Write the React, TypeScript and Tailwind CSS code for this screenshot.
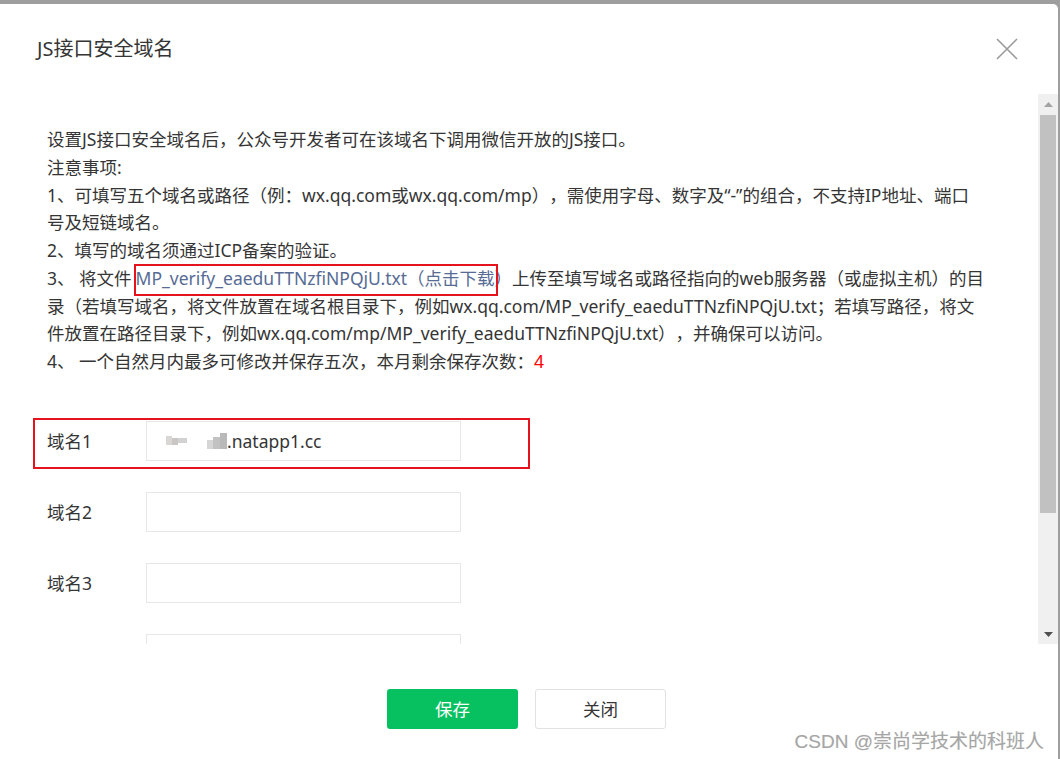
import { useState } from "react"

const FILE_NAME = "MP_verify_eaeduTTNzfiNPQjU.txt"

export default function App() {
  const [domains, setDomains] = useState(["", "", "", "", ""])

  return (
    <div className="h-[759px] w-[1060px] overflow-hidden bg-[#9e9e9e] pt-[4px] pr-[2px] font-['Noto_Sans','Noto_Sans_CJK_SC',sans-serif] text-[#353535] [text-spacing-trim:space-all]">
      <div className="relative flex h-full flex-col rounded-tr-[5px] bg-white">
        <Header />

        <div className="flex h-[550px]">
          <div className="flex-1 overflow-hidden pl-[47px] pt-[32px]">
            <Notes />

            <div className="mt-[45px] flex flex-col gap-[31px]">
              {domains.map((value, i) => (
                <DomainRow
                  key={i}
                  index={i + 1}
                  value={value}
                  highlighted={i === 0}
                  onChange={(v) =>
                    setDomains((d) => d.map((x, j) => (j === i ? v : x)))
                  }
                />
              ))}
            </div>
          </div>
          <Scrollbar />
        </div>

        <div className="flex justify-center gap-[17px] pt-[45px] pr-[5px]">
          <button className="h-[40px] w-[131px] rounded-[3px] bg-[#07c160] text-[17.5px] text-white">
            保存
          </button>
          <button className="h-[40px] w-[131px] rounded-[3px] border border-[#e2e2e2] bg-white text-[17.5px] text-[#353535]">
            关闭
          </button>
        </div>

        <div className="absolute right-[14px] bottom-[3px] font-['Liberation_Sans','Noto_Sans_CJK_SC',sans-serif] text-[19px] text-[#a6a6a6] [text-shadow:0_0_1px_#e0e0e0]">
          CSDN @崇尚学技术的科班人
        </div>
      </div>
    </div>
  )
}

function Header() {
  return (
    <div className="flex h-[90px] shrink-0 items-center justify-between pl-[37px] pr-[40px]">
      <h3 className="text-[20px] text-[#353535]">JS接口安全域名</h3>
      <svg width="22" height="22" viewBox="0 0 22 22" className="text-[#9a9a9a]">
        <path d="M1 1L21 21M21 1L1 21" stroke="currentColor" strokeWidth="1.6" fill="none" />
      </svg>
    </div>
  )
}

function Notes() {
  return (
    <div className="whitespace-nowrap text-[17.5px] leading-[27.75px]">
      <p>设置JS接口安全域名后，公众号开发者可在该域名下调用微信开放的JS接口。</p>
      <p>注意事项:</p>
      <p>
        1、可填写五个域名或路径（例：wx.qq.com或wx.qq.com/mp），需使用字母、数字及“-”的组合，不支持IP地址、端口
        <br />
        号及短链域名。
      </p>
      <p>2、填写的域名须通过ICP备案的验证。</p>
      <p>
        3、 将文件
        <a className="relative ml-[4px] text-[#576b95]">
          {FILE_NAME}（点击下载）
          {/* red annotation box from the screenshot */}
          <span className="pointer-events-none absolute -top-[2px] -bottom-[6px] -left-[2px] right-[14px] border-2 border-[#e5131d]" />
        </a>
        上传至填写域名或路径指向的web服务器（或虚拟主机）的目
        <br />
        录（若填写域名，将文件放置在域名根目录下，例如wx.qq.com/{FILE_NAME}；若填写路径，将文
        <br />
        件放置在路径目录下，例如wx.qq.com/mp/{FILE_NAME}），并确保可以访问。
      </p>
      <p>
        4、 一个自然月内最多可修改并保存五次，本月剩余保存次数：
        <span className="text-[#f00]">4</span>
      </p>
    </div>
  )
}

function DomainRow({
  index,
  value,
  highlighted,
  onChange,
}: {
  index: number
  value: string
  highlighted: boolean
  onChange: (v: string) => void
}) {
  return (
    <div className="relative flex h-[40px] items-center">
      <label className="w-[99px] shrink-0 text-[17.5px]">域名{index}</label>
      <div className="flex h-[40px] w-[315px] items-center border border-[#e7e7e7] pl-[19px]">
        {highlighted ? (
          <MaskedDomain />
        ) : (
          <input
            className="h-full w-full bg-transparent text-[17.5px] outline-none"
            value={value}
            onChange={(e) => onChange(e.target.value)}
          />
        )}
      </div>
      {highlighted && (
        <div className="pointer-events-none absolute -top-[3px] -bottom-[8px] -left-[14px] w-[497px] border-2 border-[#e5131d]" />
      )}
    </div>
  )
}

function MaskedDomain() {
  return (
    <div className="flex items-center text-[17.5px]">
      <div className="flex items-end gap-0">
        <span className="mb-[1px] h-[9px] w-[6px] bg-[#d9d6d4]" />
        <span className="mb-[1px] h-[7px] w-[6px] bg-[#c9c6c4]" />
        <span className="mb-[3px] h-[5px] w-[9px] bg-[#d2d2d2]" />
      </div>
      <div className="ml-[20px] flex items-end">
        <span className="h-[9px] w-[6px] bg-[#d6d6d6]" />
        <span className="h-[12px] w-[7px] bg-[#c2c2c2]" />
        <span className="h-[16px] w-[7px] bg-[#b9b9b9]" />
      </div>
      <span>.natapp1.cc</span>
    </div>
  )
}

function Scrollbar() {
  return (
    <div className="flex w-[20px] shrink-0 flex-col bg-[#f0f0f0]">
      <div className="flex h-[20px] items-center justify-center">
        <svg width="9" height="5" viewBox="0 0 9 5">
          <path d="M4.5 0L9 5H0Z" fill="#a3a3a3" />
        </svg>
      </div>
      <div className="mx-[2px] mt-[1px] h-[398px] bg-[#c1c1c1]" />
      <div className="flex-1" />
      <div className="flex h-[20px] items-center justify-center">
        <svg width="9" height="5" viewBox="0 0 9 5">
          <path d="M0 0H9L4.5 5Z" fill="#505050" />
        </svg>
      </div>
    </div>
  )
}
